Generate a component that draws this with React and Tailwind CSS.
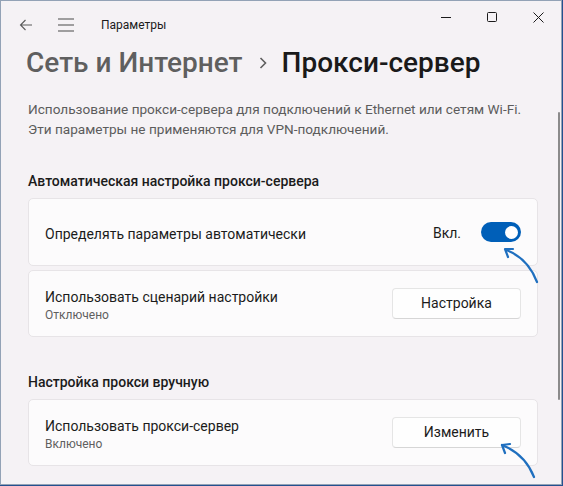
import React from "react";

const font = { fontFamily: 'Roboto, "Noto Sans", sans-serif' };

const BackIcon = () => (
  <svg width="14" height="12" viewBox="0 0 14 12" fill="none" stroke="#5a5a5a" strokeWidth="1.1">
    <path d="M13 6H1.5M6.5 1L1.5 6l5 5" />
  </svg>
);

const MenuIcon = () => (
  <svg width="16" height="14" viewBox="0 0 16 14" fill="none" stroke="#4a4a4a" strokeWidth="1.1">
    <path d="M0 1h16M0 7h16M0 13h16" />
  </svg>
);

const Toggle = () => (
  <div className="w-[40px] h-[20px] rounded-full bg-[#005fb8] flex items-center justify-end pr-[3px]">
    <div className="w-[13px] h-[13px] rounded-full bg-white" />
  </div>
);

const Btn = ({ children }) => (
  <button className="w-[129px] h-[31px] rounded-[4px] bg-[#fefefe] border border-[#e5e5e5] border-b-[#d6d6d6] text-[14px] text-[#1b1b1b]">
    {children}
  </button>
);

const Card = ({ title, sub, right, h = "h-[67px]" }) => (
  <div className={`${h} rounded-[5px] bg-[#fcfbfc] border border-[#e7e4e7] flex items-center justify-between pl-[16px] pr-[16px]`}>
    <div className="flex flex-col pt-[3px]">
      <span className="text-[14px] leading-[20px] text-[#1b1b1b]">{title}</span>
      {sub && <span className="text-[12px] leading-[16px] text-[#5f5f5f]">{sub}</span>}
    </div>
    {right}
  </div>
);

export default function App() {
  return (
    <div className="w-[563px] h-[486px] bg-[#24508f] overflow-hidden" style={font}>
      <div className="relative w-[562px] h-[485px] bg-[#f5f2f5] border border-[#93a2b6] flex flex-col">
        {/* title bar */}
        <div className="flex items-start justify-between h-[44px]">
          <div className="flex items-center h-[44px] pt-[4px] pl-[18px]">
            <BackIcon />
            <div className="ml-[25px]"><MenuIcon /></div>
            <span className="ml-[27px] text-[12px] text-[#1b1b1b]">Параметры</span>
          </div>
          <div className="flex h-[32px]">
            <div className="w-[46px] flex items-center justify-center">
              <svg width="10" height="10" viewBox="0 0 10 10"><path d="M0 5.5h10" stroke="#1b1b1b" strokeWidth="1" /></svg>
            </div>
            <div className="w-[46px] flex items-center justify-center">
              <svg width="10" height="10" viewBox="0 0 10 10"><rect x="0.5" y="0.5" width="9" height="9" rx="1" fill="none" stroke="#1b1b1b" strokeWidth="1" /></svg>
            </div>
            <div className="w-[46px] flex items-center justify-center">
              <svg width="11" height="11" viewBox="0 0 11 11"><path d="M0.5 0.5l10 10M10.5 0.5l-10 10" stroke="#1b1b1b" strokeWidth="1" /></svg>
            </div>
          </div>
        </div>

        {/* breadcrumb header */}
        <div className="flex items-center h-[36px] pl-[25px] text-[28px] leading-[36px] font-medium">
          <span className="text-[#5f5f5f]">Сеть и Интернет</span>
          <svg className="ml-[16px] mr-[15px]" width="8" height="12" viewBox="0 0 8 12" fill="none" stroke="#5f5f5f" strokeWidth="1.6">
            <path d="M1.5 1l5 5-5 5" />
          </svg>
          <span className="text-[#1a1a1a]">Прокси-сервер</span>
        </div>

        <div className="flex flex-col pl-[27px] pr-[23px]">
          <p className="mt-[18px] text-[13.6px] leading-[20px] text-[#5c5c5c]">
            Использование прокси-сервера для подключений к Ethernet или сетям Wi-Fi.
            <br />
            Эти параметры не применяются для VPN-подключений.
          </p>

          <h3 className="mt-[32px] text-[14px] leading-[20px] font-medium text-[#1b1b1b]">
            Автоматическая настройка прокси-сервера
          </h3>
          <div className="mt-[7px] flex flex-col gap-[4px]">
            <Card
              h="h-[68px]"
              title="Определять параметры автоматически"
              right={
                <div className="flex items-center gap-[20px]">
                  <span className="text-[14px] text-[#1b1b1b] pt-[2px]">Вкл.</span>
                  <Toggle />
                </div>
              }
            />
            <Card title="Использовать сценарий настройки" sub="Отключено" right={<Btn>Настройка</Btn>} />
          </div>

          <h3 className="mt-[35px] text-[14px] leading-[20px] font-medium text-[#1b1b1b]">
            Настройка прокси вручную
          </h3>
          <div className="mt-[7px]">
            <Card title="Использовать прокси-сервер" sub="Включено" right={<Btn>Изменить</Btn>} />
          </div>
        </div>

        {/* scrollbar */}
        <div className="absolute right-[1px] top-[111px] w-[2px] h-[288px] rounded-full bg-[#8b8b8b]" />

        {/* annotation arrows */}
        <svg className="absolute left-[-1px] top-[-1px] pointer-events-none" width="563" height="486" fill="none" stroke="#1f6fbf" strokeWidth="2.2" strokeLinecap="round" strokeLinejoin="round">
          <path d="M537 282 Q528 258 506 250" />
          <path d="M513 249 L505 249 L508 257" />
          <path d="M534 477 Q525 454 502 445" />
          <path d="M510 444 L502 445 L505 453" />
        </svg>
      </div>
    </div>
  );
}
